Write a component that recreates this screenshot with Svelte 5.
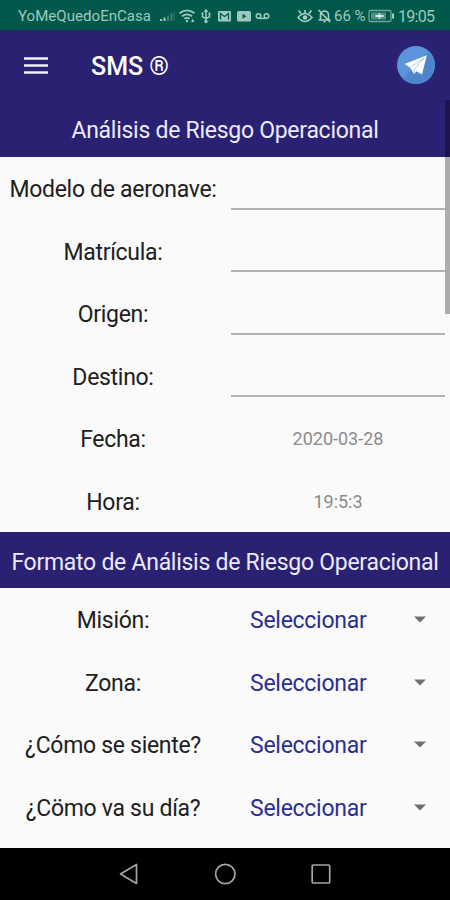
<script>
  let flight = $state([
    { id: "modelo", label: "Modelo de aeronave:", value: "" },
    { id: "matricula", label: "Matrícula:", value: "" },
    { id: "origen", label: "Origen:", value: "" },
    { id: "destino", label: "Destino:", value: "" },
  ]);

  const stamps = [
    { label: "Fecha:", value: "2020-03-28" },
    { label: "Hora:", value: "19:5:3" },
  ];

  const questions = ["Misión:", "Zona:", "¿Cómo se siente?", "¿Cömo va su día?"];
</script>

<div class="screen">
  <div class="status">
    <span class="carrier">YoMeQuedoEnCasa</span>
    <svg class="icons" width="116" height="16" viewBox="0 0 116 16">
      <g fill="#9cc9bd">
        <path d="M1 11h2v2H1zM4.500 9.500h2V13h-2z" />
        <path d="M8 7.500h2V13H8zM11.500 5h2v8h-2z" opacity=".35" />
        <path d="M14.500 2.500H16V13h-1.500z" opacity=".2" />
      </g>
      <g fill="none" stroke="#9cc9bd" stroke-width="1.7">
        <path d="M20.500 5.200q7.500-5.500 15 0M23 8.200q5-3.800 10 0M25.300 10.800q2.700-2 5.400 0" />
        <path d="M47 2v12M43.500 6v2.700l3.500 2 3.500-2V6" stroke-width="1.500" />
      </g>
      <g fill="#9cc9bd">
        <circle cx="28" cy="13" r="1.200" />
        <path d="M32 14l1.700-3.500L35.400 14z" />
        <path d="M47 .5L49.300 4h-4.600zM42.500 4.500h2v2h-2zM49.500 4.500h2v2h-2z" /><circle cx="47" cy="13.500" r="1.700" />
        <rect x="59" y="3" width="13" height="10.500" rx="1" />
        <rect x="78" y="3" width="14" height="10.500" rx="1.500" />
      </g>
      <path d="M61.500 11.500V5.500l4 3 4-3v6" fill="none" stroke="#02594b" stroke-width="1.300" />
      <path d="M83.500 5.700l4 2.500-4 2.500z" fill="#02594b" />
      <g fill="none" stroke="#9cc9bd" stroke-width="1.500">
        <circle cx="99.500" cy="8" r="2.300" /><circle cx="107.500" cy="8" r="2.300" /><path d="M99.500 10.400h8" />
      </g>
    </svg>
    <svg class="alerts" width="36" height="16" viewBox="0 0 36 16">
      <g fill="none" stroke="#a5cec3" stroke-width="1.6">
        <path d="M1 9.500q7-8 14 0-7 8-14 0zM1.500 2.500L4 5.500M8 2v3M14.500 2.500L12 5.500" />
        <path d="M23.500 11.500V7q0-3.500 4-4 4 .5 4 4v4.500M21.500 12h12M21.500 2l11.500 12" />
      </g>
      <g fill="#a5cec3"><circle cx="8" cy="9.500" r="2.300" /><path d="M26 13h3l-1.500 2z" /></g>
    </svg>
    <span class="percent">66 %</span>
    <svg class="battery" width="28" height="14" viewBox="0 0 28 14">
      <rect x="1" y="1.500" width="22" height="11" rx="1.500" fill="none" stroke="#6fa89c" stroke-width="1.300" />
      <rect x="3" y="3.500" width="15" height="7" fill="#4f9285" />
      <path d="M7.500 7h8M11.500 4.500v5" stroke="#d5ebe5" stroke-width="1.800" />
      <path d="M24 4.500h2v5h-2z" fill="#a5cec3" />
    </svg>
    <span class="clock">19:05</span>
  </div>

  <header class="bar">
    <button class="menu" aria-label="Menú">
      <svg width="24" height="17" viewBox="0 0 24 17"><path d="M0 1.500h24M0 8.500h24M0 15.500h24" stroke="#f1effa" stroke-width="2.6" /></svg>
    </button>
    <h1>SMS ®</h1>
    <button class="send" aria-label="Enviar">
      <svg width="38" height="38" viewBox="0 0 38 38">
        <circle cx="19" cy="19" r="19" fill="#5b94da" />
        <path d="M5.500 32.500L32.400 5.600A19 19 0 0 1 5.500 32.500z" fill="#4f86cb" />
        <path d="M7.500 18L29.800 9.300 25 28.500 19.500 25.200 17 28 13 21.500z" fill="#fff" />
        <path d="M13 21.500L27 12M17 27.500l.3-4.500L27.500 12" fill="none" stroke="#8fb0dc" stroke-width=".7" />
      </svg>
    </button>
  </header>

  <main>
    <h2 class="first">Análisis de Riesgo Operacional</h2>
    {#each flight as f (f.id)}
      <div class="row">
        <label for={f.id}>{f.label}</label>
        <div class="cell"><input id={f.id} bind:value={f.value} /></div>
      </div>
    {/each}
    {#each stamps as s}
      <div class="row">
        <span class="label">{s.label}</span>
        <span class="stamp">{s.value}</span>
      </div>
    {/each}

    <h2>Formato de Análisis de Riesgo Operacional</h2>
    {#each questions as q}
      <div class="row">
        <span class="label">{q}</span>
        <button class="pick">
          <span>Seleccionar</span>
          <svg width="12" height="7" viewBox="0 0 12 7"><path d="M0 .5h12L6 6.500z" fill="#707070" /></svg>
        </button>
      </div>
    {/each}
    <div class="thumb"></div>
  </main>

  <nav>
    <svg width="20" height="22" viewBox="0 0 20 22"><path d="M17.500 1.500v19L1.500 11z" /></svg>
    <svg width="22" height="22" viewBox="0 0 22 22"><circle cx="11.300" cy="11" r="9.700" /></svg>
    <svg width="20" height="22" viewBox="0 0 20 22"><rect x="1.200" y="2" width="17.500" height="18" rx="1" /></svg>
  </nav>
</div>

<style>
  :global(body) { margin: 0; }

  .screen {
    width: 450px; height: 900px; overflow: hidden;
    display: flex; flex-direction: column;
    font-family: Roboto, "Liberation Sans", sans-serif;
    background: #fafafa; color: #202020;
  }

  button { border: 0; padding: 0; background: none; font: inherit; display: flex; align-items: center; }
  svg { display: block; flex: none; }

  .status {
    height: 30px; flex: none; box-sizing: border-box; padding: 2px 12px 0 18px;
    display: flex; align-items: center;
    background: #02594b; color: #9cc9bd; font-size: 15px; white-space: nowrap;
  }
  .carrier { width: 141px; letter-spacing: 0.05px; }
  .alerts { margin-left: 22px; }
  .percent { width: 32px; margin-left: 1px; }
  .battery { margin-left: 2px; }
  .clock { margin-left: 2px; font-size: 16px; letter-spacing: -0.7px; }

  .bar {
    height: 70px; flex: none; box-sizing: border-box; padding: 0 15px 0 24px;
    display: flex; align-items: center;
    background: #2a2172; color: #fff;
  }
  h1 { margin: 3px auto 0 43px; font-size: 25px; font-weight: 500; }

  main { position: relative; flex: 1; min-height: 0; overflow: hidden; }

  h2 {
    margin: 0; height: 56px; line-height: 61px;
    background: #2a2172; color: #eceaf8;
    font-size: 23px; font-weight: 400; letter-spacing: -0.27px; text-align: center; white-space: nowrap;
  }
  .first { height: 56.5px; }

  .row {
    height: 62.5px; display: grid; grid-template-columns: 226px 1fr; align-items: center;
  }
  .row label, .label {
    font-size: 23px; letter-spacing: -0.3px; text-align: center; padding-top: 4px; white-space: nowrap;
  }

  .cell { align-self: stretch; padding: 0 5px; display: flex; }
  input {
    width: 100%; height: 53px; box-sizing: border-box;
    border: 0; border-bottom: 2px solid #b2b2b2; padding: 0; outline: 0;
    background: none; font: inherit; font-size: 19px;
  }

  .stamp { font-size: 18px; color: #8b8b8b; text-align: center; padding-top: 2px; }

  .pick { justify-content: space-between; padding: 2px 24px 0; font-size: 23px; letter-spacing: -0.27px; color: #2b2f8f; }
  .pick span { padding-top: 2px; }

  .thumb {
    position: absolute; top: 0; right: 0; width: 5px; height: 214px;
    background: rgba(0, 0, 0, 0.31);
  }

  nav {
    height: 52.5px; flex: none; display: flex; justify-content: center; align-items: center; gap: 75px;
    background: #000;
  }
  nav svg { fill: none; stroke: #a5a5a5; stroke-width: 1.7; stroke-linejoin: round; }
</style>
